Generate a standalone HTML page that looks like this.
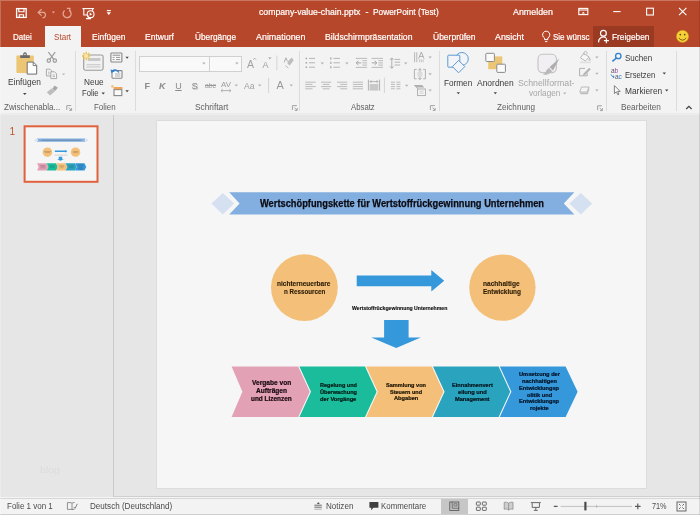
<!DOCTYPE html>
<html lang="de">
<head>
<meta charset="utf-8">
<title>company-value-chain.pptx - PowerPoint (Test)</title>
<style>
html,body{margin:0;padding:0;}
body{width:700px;height:515px;overflow:hidden;position:relative;background:#e6e6e6;font-family:"Liberation Sans",sans-serif;}
.a{position:absolute;}
.t{position:absolute;line-height:1;white-space:nowrap;transform-origin:0 50%;}
#titlebar{left:0;top:0;width:700px;height:47px;background:#b7472a;}
#tabstart{left:45px;top:26px;width:35.5px;height:21px;background:#f3f3f3;}
#share{left:593.3px;top:25.6px;width:61px;height:21.4px;background:#9b3a22;}
#ribbon{left:0;top:47px;width:700px;height:66px;background:#f3f3f3;}
#ribbonline{left:0;top:113px;width:700px;height:1.5px;background:#ececec;}
#work{left:0;top:114.5px;width:700px;height:382.5px;background:#e6e6e6;}
#divider{left:113px;top:114.5px;width:1.4px;height:382.5px;background:#c9c9c9;}
#slide{left:157px;top:121px;width:489.4px;height:366.8px;background:#f6f6f6;box-shadow:0 0 0 0.8px #dadada;}
#status{left:0;top:497px;width:700px;height:18px;background:#f3f3f3;border-top:1px solid #f4f4f4;border-bottom:1px solid #cfcfcf;box-sizing:border-box;}
#statusline{left:0;top:498px;width:700px;height:1px;background:#d6d6d6;}
#workline{left:114.400px;top:496px;width:586px;height:1px;background:#cfcfcf;}
.gs{position:absolute;top:51px;width:1px;height:60px;background:#dcdcdc;}
.combo{position:absolute;background:#f9f9f9;border:1px solid #d0d0d0;box-sizing:border-box;}
#thumb{left:23.600px;top:125.300px;width:74.900px;height:57.500px;box-sizing:border-box;border:1.800px solid #e0623c;background:#f5f5f5;}
#viewsel{left:441px;top:499px;width:27px;height:15px;background:#c6c6c6;}
svg{position:absolute;left:0;top:0;overflow:visible;}
#wb{left:0;top:0;width:700px;height:515px;box-sizing:border-box;border-left:1px solid rgba(255,255,255,0.22);border-top:1px solid rgba(255,255,255,0.25);border-right:1px solid rgba(0,0,0,0.10);pointer-events:none;}
</style>
</head>
<body>
<div class="a" id="titlebar"></div>
<div class="a" id="tabstart"></div>
<div class="a" id="share"></div>
<div class="a" id="ribbon"></div>
<div class="a" id="ribbonline"></div>
<div class="a" id="work"></div>
<div class="a" id="divider"></div>
<div class="a" id="slide"></div>
<div class="a" id="status"></div>
<div class="a" id="statusline"></div>
<div class="a" id="workline"></div>
<div class="a" id="viewsel"></div>
<div class="gs" style="left:74.5px"></div>
<div class="gs" style="left:135.3px"></div>
<div class="gs" style="left:299.3px"></div>
<div class="gs" style="left:439.3px"></div>
<div class="gs" style="left:605.6px"></div>
<div class="gs" style="left:675.5px"></div>
<div class="combo" style="left:138.7px;top:55.5px;width:71px;height:16px"></div>
<div class="combo" style="left:208.9px;top:55.5px;width:33px;height:16px"></div>
<svg width="700" height="515" viewBox="0 0 700 515">
<g id="slideart">
<!-- banner -->
<polygon points="229.2,192.2 574.4,192.2 563.8,203.4 574.4,214.6 229.2,214.6 239.6,203.4" fill="#82afdf"/>
<polygon points="211.4,203.6 222.8,193 234.2,203.6 222.8,214.4" fill="#d5e1f1"/>
<polygon points="569.4,203.6 580.8,193 592.2,203.6 580.8,214.4" fill="#d5e1f1"/>
<!-- circles -->
<circle cx="304.4" cy="287.6" r="33.4" fill="#f4c079"/>
<circle cx="502.4" cy="287.6" r="33.2" fill="#f4c079"/>
<!-- arrows -->
<polygon points="356.7,275.4 431.3,275.4 431.3,270.1 444.2,280.8 431.3,291.5 431.3,286.2 356.7,286.2" fill="#3498db"/>
<polygon points="384.1,320 408.6,320 408.6,337.6 420.8,337.6 396.2,348 371.3,337.6 384.1,337.6" fill="#3498db"/>
<!-- chevrons -->
<polygon points="231.6,366.4 298.2,366.4 309.8,391.7 298.2,417 231.6,417 242.4,391.7" fill="#e3a1b6"/>
<polygon points="299.4,366.4 365.0,366.4 376.6,391.7 365.0,417 299.4,417 311.0,391.7" fill="#1abc9c"/>
<polygon points="366.2,366.4 431.8,366.4 443.4,391.7 431.8,417 366.2,417 377.8,391.7" fill="#f4c079"/>
<polygon points="433.0,366.4 498.6,366.4 510.2,391.7 498.6,417 433.0,417 444.6,391.7" fill="#2aa3bf"/>
<polygon points="499.8,366.4 565.6,366.4 577.6,391.7 565.6,417 499.8,417 511.4,391.7" fill="#3498db"/>
</g>
<rect x="24.600" y="126.300" width="72.900" height="55.500" fill="#f5f5f5" stroke="#e0623c" stroke-width="2"/>
<g id="thumbart" transform="translate(26.5,128.5) scale(0.142) translate(-157,-121)">
<use href="#slideart"/>
<g fill="#333" opacity="0.3">
<rect x="262" y="200" width="280" height="7"/>
<rect x="280" y="281" width="50" height="5"/><rect x="286" y="289" width="38" height="5"/>
<rect x="484" y="281" width="36" height="5"/><rect x="484" y="289" width="36" height="5"/>
<rect x="354" y="306" width="92" height="4"/>
<rect x="253" y="380" width="38" height="5"/><rect x="257" y="388" width="30" height="5"/><rect x="252" y="396" width="40" height="5"/>
<rect x="320" y="382" width="36" height="4"/><rect x="320" y="389" width="36" height="4"/><rect x="320" y="396" width="36" height="4"/>
<rect x="387" y="382" width="36" height="4"/><rect x="389" y="389" width="32" height="4"/><rect x="394" y="396" width="22" height="4"/>
<rect x="452" y="382" width="41" height="4"/><rect x="458" y="389" width="28" height="4"/><rect x="456" y="396" width="33" height="4"/>
<rect x="519" y="372" width="40" height="4"/><rect x="522" y="379" width="35" height="4"/><rect x="519" y="386" width="40" height="4"/><rect x="526" y="393" width="26" height="4"/><rect x="519" y="400" width="40" height="4"/><rect x="529" y="407" width="20" height="4"/>
</g>
</g>
</svg>

<svg width="700" height="515" viewBox="0 0 700 515" fill="none">
<!-- ===== title bar ===== -->
<g stroke="#fff" stroke-width="1.3">
 <rect x="16.6" y="8.6" width="9.6" height="8.8"/>
 <path d="M18.8 8.6v3.2h5.2V8.6" stroke-width="1.1"/>
 <path d="M19.3 17.4v-2.6h4.2v2.6" stroke-width="1.1"/>
</g>
<g stroke="#e0a595" stroke-width="1.3">
 <path d="M41.6 9.2L38.2 12.4L41.6 15.6"/>
 <path d="M38.4 12.4H44a3 3 0 0 1 0 5.2H42.5"/>
 <path d="M69.4 10.4A4 4 0 1 1 64.6 10.6" />
 <path d="M66.8 8.4h3v3.2" />
</g>
<path d="M51.8 11.6h3.2l-1.6 1.9z" fill="#e0a595"/>
<g stroke="#fff" stroke-width="1.1">
 <path d="M82.4 8.6H94"/>
 <path d="M83.8 8.8v6.2h3.4M92.6 8.8v2"/>
 <circle cx="90.6" cy="14.2" r="3.4"/>
 <path d="M88.2 15.4v2.4M86 18.6h5"/>
</g>
<path d="M89.7 12.6l2.5 1.6l-2.5 1.6z" fill="#fff"/>
<path d="M106.800 10.600h4" stroke="#fff" stroke-width="1.100"/>
<path d="M106.600 12.300h4.400l-2.200 2.600z" fill="#fff"/>
<!-- window buttons -->
<g stroke="#fff" stroke-width="1.1">
 <rect x="578.8" y="8.4" width="9" height="6.2"/>
 <path d="M578.8 10h9"/>
 <path d="M613.2 11.6h7.4"/>
 <rect x="646.6" y="8.2" width="6.8" height="6.8"/>
 <path d="M679 7.8l7.4 7.4M686.4 7.8l-7.4 7.4"/>
</g>
<path d="M581.6 13.6l1.7-1.9l1.7 1.9z" fill="#fff"/>
<!-- tell me bulb -->
<g stroke="#fff" stroke-width="1">
 <path d="M544.6 39.6v-1.6a3.6 3.6 0 1 1 3.2 0v1.6z"/>
 <path d="M545 41.6h2.4"/>
</g>
<!-- share person -->
<g stroke="#fff" stroke-width="1.2">
 <circle cx="603.4" cy="33.2" r="2.9"/>
 <path d="M598.6 42.4a4.8 4.8 0 0 1 7.4 -4.6"/>
 <path d="M606.4 38.2v5M603.9 40.7h5"/>
</g>
<!-- smiley -->
<circle cx="682.5" cy="36.4" r="6.1" fill="#f7d038" stroke="#c9961a" stroke-width="0.5"/>
<circle cx="680.3" cy="34.6" r="0.85" fill="#5a4500"/><circle cx="684.7" cy="34.6" r="0.85" fill="#5a4500"/>
<path d="M679 37.8a3.8 3.8 0 0 0 7 0" stroke="#5a4500" stroke-width="0.8"/>

<!-- ===== ribbon: clipboard group ===== -->
<rect x="16.4" y="55.6" width="17.4" height="17.4" rx="0.8" fill="#edc675"/>
<path d="M20.2 57.9v-2.6h3v-1.2a1.8 1.8 0 0 1 3.6 0v1.2h3v2.6z" fill="#6a6a6a"/>
<circle cx="25" cy="54.5" r="0.8" fill="#f3f3f3"/>
<path d="M27.2 62.1h6.2l3.3 3.3v8.7h-9.5z" fill="#fdfdfd" stroke="#6e6e6e" stroke-width="1"/>
<path d="M33.2 62.3v3.3h3.3" stroke="#6e6e6e" stroke-width="0.9"/>
<path d="M23 93h3.6l-1.8 2z" fill="#444"/>
<!-- scissors -->
<g stroke="#9c9c9c" stroke-width="1.2">
 <path d="M48.4 52.2l5.6 7.4M55.2 52.2l-5.6 7.4"/>
 <circle cx="48.8" cy="60.6" r="1.7"/><circle cx="54.8" cy="60.6" r="1.7"/>
</g>
<!-- copy -->
<g stroke="#a2a2a2" stroke-width="0.9" fill="#f3f3f3">
 <path d="M46.4 69.2h3.6l1.6 1.6v5.2h-5.2z"/>
 <path d="M50.8 71.8h3.8l2 2v4.8h-5.8z"/>
 <path d="M48 72.2h1.6M48 73.8h1.6M52.6 75h2.4M52.6 76.6h2.4" stroke-width="0.7"/>
</g>
<path d="M62 73.4h3.2l-1.6 1.9z" fill="#b5b5b5"/>
<!-- format painter -->
<g>
 <path d="M54.6 85.6l3.2 2.2l-2.6 3.2l-3-2z" fill="#a8a8a8"/>
 <path d="M51.6 88.6l3.4 2.6l-5 4.2l-3.2-3.2z" fill="#bdbdbd"/>
</g>
<!-- ===== slides group ===== -->
<rect x="83.7" y="55" width="19.4" height="15.2" rx="1.6" fill="#f1f1f1" stroke="#9b9b9b" stroke-width="1.1"/>
<rect x="87.8" y="58" width="12.6" height="3" fill="#c9c9c9"/>
<rect x="86.6" y="64" width="13.8" height="1.3" fill="#cfcfcf"/>
<rect x="86.6" y="66.3" width="13.8" height="1.3" fill="#cfcfcf"/>
<g stroke="#f0c050" stroke-width="1.3">
 <path d="M86.2 51.800v8.400M82 56h8.400M83.200 53l6 6M89.200 53l-6 6"/>
</g>
<rect x="84.4" y="54.3" width="3.4" height="3.4" fill="#fbe9b3"/>
<path d="M101.5 92.4h3.4l-1.7 2z" fill="#444"/>
<!-- layout -->
<rect x="110.9" y="53" width="11" height="9" rx="0.8" fill="#fafafa" stroke="#868686" stroke-width="1.1"/>
<path d="M112.6 55.2h7.6" stroke="#8a8a8a" stroke-width="1"/>
<path d="M112.6 57.4h2M112.6 59.6h2M116 57.4h4.2M116 59.6h4.2" stroke="#8a8a8a" stroke-width="0.9"/>
<path d="M125.4 56.8h3.4l-1.7 2z" fill="#444"/>
<!-- reset -->
<rect x="112" y="70.6" width="10" height="7.6" rx="0.6" fill="#fafafa" stroke="#868686" stroke-width="1.1"/>
<path d="M115 74h5.4M115 76h5.4" stroke="#9a9a9a" stroke-width="0.8"/>
<path d="M118.8 72.6a4 4 0 0 0 -6.4 -1.6" stroke="#2f7fcf" stroke-width="1.3"/>
<path d="M110.6 69.2l0.6 3.8l3.4-1.4z" fill="#2f7fcf"/>
<!-- section -->
<rect x="114" y="89.6" width="7.8" height="6" fill="#fafafa" stroke="#868686" stroke-width="1.1"/>
<rect x="113.6" y="87" width="8.8" height="2.2" fill="#f0a35a"/>
<circle cx="112.4" cy="86.4" r="1.3" fill="#f3c27a"/>
<path d="M125.4 90.2h3.4l-1.7 2z" fill="#444"/>

<!-- ===== font group ===== -->
<path d="M202.2 62.4h3.4l-1.70 2z" fill="#b0b0b0"/><path d="M235.2 62.4h3.4l-1.70 2z" fill="#b0b0b0"/><path d="M253.4 59.6l1.3-1.4l1.3 1.4" stroke="#a0a0a0" stroke-width="0.9"/><path d="M268.2 57.4h3.4l-1.7 1.9z" fill="#a0a0a0"/><path d="M276.9 55.6v14.8" stroke="#d4d4d4" stroke-width="1"/><path d="M288.6 60.4l3.2-2.8l1.9 2.6l-4 5.2l-2.4-1.8z" fill="#bdbdbd"/><path d="M284.2 62.4l1.7-4.6l1.6 3.6" stroke="#a6a6a6" stroke-width="0.9"/><path d="M285.4 65.6l3 2.4" stroke="#b5b5b5" stroke-width="0.9"/><path d="M221 90.6h10M222.6 89.2l-1.6 1.4l1.6 1.4M229.4 89.2l1.6 1.4l-1.6 1.4" stroke="#a2a2a2" stroke-width="0.8"/><path d="M234.6 84.6h3.4l-1.70 2z" fill="#b2b2b2"/><path d="M258.0 84.6h3.4l-1.70 2z" fill="#b2b2b2"/><path d="M289.6 84.6h3.4l-1.70 2z" fill="#b2b2b2"/><path d="M268.6 77.8v15.2" stroke="#d4d4d4" stroke-width="1"/><path d="M292.4 110.0v-4.4h4.4" stroke="#9a9a9a" stroke-width="0.9"/><path d="M294.4 107.6l2.6 2.6M297.2 108.0v2.4h-2.4" stroke="#9a9a9a" stroke-width="0.9"/><path d="M66.8 110.0v-4.4h4.4" stroke="#9a9a9a" stroke-width="0.9"/><path d="M68.8 107.6l2.6 2.6M71.6 108.0v2.4h-2.4" stroke="#9a9a9a" stroke-width="0.9"/>
<!-- ===== paragraph group ===== -->
<rect x="305.6" y="57.7" width="1.5" height="1.5" fill="#a6a6a6"/><path d="M309 58.4h6" stroke="#b4b4b4" stroke-width="1"/><rect x="305.6" y="62.1" width="1.5" height="1.5" fill="#a6a6a6"/><path d="M309 62.8h6" stroke="#b4b4b4" stroke-width="1"/><rect x="305.6" y="66.5" width="1.5" height="1.5" fill="#a6a6a6"/><path d="M309 67.2h6" stroke="#b4b4b4" stroke-width="1"/><path d="M320.6 62.4h3.4l-1.70 2z" fill="#b2b2b2"/><rect x="330.3" y="57.3" width="1.1" height="2.3" fill="#a0a0a0"/><path d="M333.4 58.4h6.5" stroke="#b4b4b4" stroke-width="1"/><rect x="330.3" y="61.7" width="1.1" height="2.3" fill="#a0a0a0"/><path d="M333.4 62.8h6.5" stroke="#b4b4b4" stroke-width="1"/><rect x="330.3" y="66.1" width="1.1" height="2.3" fill="#a0a0a0"/><path d="M333.4 67.2h6.5" stroke="#b4b4b4" stroke-width="1"/><path d="M345.2 62.4h3.4l-1.70 2z" fill="#b2b2b2"/><path d="M355.8 58.4h11.3M355.8 67.4h11.3M362.4 60.7h4.7M362.4 62.9h4.7M362.4 65.1h4.7" stroke="#b4b4b4" stroke-width="0.9"/><path d="M356.2 62.9h5M358.4 60.8l-2.2 2.1l2.2 2.1" stroke="#a4a4a4" stroke-width="1"/><path d="M371.6 58.4h11.4M371.6 67.4h11.4M378.4 60.7h4.6M378.4 62.9h4.6M378.4 65.1h4.6" stroke="#b4b4b4" stroke-width="0.9"/><path d="M371.8 62.9h5M374.6 60.8l2.2 2.1l-2.2 2.1" stroke="#a4a4a4" stroke-width="1"/><path d="M391.8 58v10.2M390 59.8l1.8-1.9l1.8 1.9M390 66.4l1.8 1.9l1.8-1.9" stroke="#a6a6a6" stroke-width="0.9"/><path d="M394.6 59.4h5.6M394.6 62.2h5.6M394.6 65h5.6" stroke="#b4b4b4" stroke-width="1"/><path d="M404.0 62.6h3.4l-1.70 2z" fill="#b2b2b2"/><path d="M414.6 52.2v10M416.8 52.2v10" stroke="#b0b0b0" stroke-width="0.9"/><path d="M418.6 58.6l2.7-6.6l2.7 6.6M419.6 56.4h3.4" stroke="#a6a6a6" stroke-width="0.9"/><path d="M419.6 59.4v2.8M421.4 59.4v2.8M423.2 59.4v2.8" stroke="#b8b8b8" stroke-width="0.8"/><path d="M428.4 56.4h3.4l-1.70 2z" fill="#b2b2b2"/><path d="M416.6 69.4h-2.2v9.4h2.2M423.2 69.4h2.2v9.4h-2.2" stroke="#a8a8a8" stroke-width="0.9"/><path d="M419.9 68.6v11M418.2 70.4l1.7-1.8l1.7 1.8M418.2 77.8l1.7 1.8l1.7-1.8" stroke="#aaaaaa" stroke-width="0.9"/><rect x="417.4" y="72" width="5" height="4.4" fill="#dcdcdc"/><path d="M428.4 73.2h3.4l-1.70 2z" fill="#b2b2b2"/><path d="M414 85h8l2.4 2.6h-8z" fill="#b0b0b0"/><path d="M414.4 85.2l3.2 3.4v2.6" stroke="#b0b0b0" stroke-width="0.9"/><rect x="417.6" y="89" width="7.8" height="6.6" fill="#f6f6f6" stroke="#a8a8a8" stroke-width="0.9"/><path d="M419.4 91.2h4.2M419.4 93.2h4.2" stroke="#c4c4c4" stroke-width="0.8"/><path d="M428.4 89.4h3.4l-1.70 2z" fill="#b2b2b2"/><path d="M305.3 82.2h10.4M305.3 84.4h7.2M305.3 86.6h10.4M305.3 88.8h7.2" stroke="#b4b4b4" stroke-width="0.9"/><path d="M321.0 82.2h10.2M322.7 84.4h6.8M321.0 86.6h10.2M322.7 88.8h6.8" stroke="#b4b4b4" stroke-width="0.9"/><path d="M337.0 82.2h10.2M340.2 84.4h7M337.0 86.6h10.2M340.2 88.8h7" stroke="#b4b4b4" stroke-width="0.9"/><path d="M352.8 82.2h10.2M352.8 84.4h10.2M352.8 86.6h10.2M352.8 88.8h10.2" stroke="#b4b4b4" stroke-width="0.9"/><path d="M368.4 79.6v11M379.6 79.6v11" stroke="#a8a8a8" stroke-width="0.9"/><path d="M370 81.6h8M371.4 80.2l-1.4 1.4l1.4 1.4M376.6 80.2l1.4 1.4l-1.4 1.4" stroke="#a4a4a4" stroke-width="0.8"/><rect x="369.6" y="84" width="8.8" height="6.6" fill="#c9c9c9"/><path d="M384.4 77.6v15.4" stroke="#d4d4d4" stroke-width="1"/><path d="M390.9 82.2h4M396.4 82.2h4M390.9 84.4h4M396.4 84.4h4M390.9 86.6h4M396.4 86.6h4M390.9 88.8h4M396.4 88.8h4" stroke="#b4b4b4" stroke-width="0.9"/><path d="M405.0 84.8h3.4l-1.70 2z" fill="#b2b2b2"/><path d="M430.4 110.0v-4.4h4.4" stroke="#9a9a9a" stroke-width="0.9"/><path d="M432.4 107.6l2.6 2.6M435.2 108.0v2.4h-2.4" stroke="#9a9a9a" stroke-width="0.9"/>

<!-- ===== drawing group ===== -->
<circle cx="461.9" cy="58.9" r="6.4" fill="#f2f4f7" stroke="#5b9bd5" stroke-width="1"/><rect x="447.8" y="55.2" width="12" height="12" rx="0.8" fill="#f2f4f7" stroke="#5b9bd5" stroke-width="1"/><path d="M458.6 60.4l6.2 6.2l-6.2 6.2l-6.2-6.2z" fill="#f2f4f7" stroke="#5b9bd5" stroke-width="1"/><path d="M456.6 92.2h3.4l-1.70 2z" fill="#444"/><rect x="488.2" y="56.4" width="14.1" height="12.8" fill="#edc675"/><rect x="485.8" y="53.3" width="8.6" height="8.2" rx="0.8" fill="#fafafa" stroke="#8a8a8a" stroke-width="1"/><rect x="496.8" y="64.2" width="8.6" height="8.2" rx="0.8" fill="#fafafa" stroke="#8a8a8a" stroke-width="1"/><path d="M493.6 92.2h3.4l-1.70 2z" fill="#444"/><rect x="538" y="54.2" width="18.4" height="18.4" rx="4.6" fill="#f1eff4" stroke="#c2c2c2" stroke-width="1.1"/><path d="M559.4 58.6l-9.800 8.400l3.400 3.600z" fill="#adadad"/><path d="M549 67.800l3.200 3.400l-2.800 2.300c-2.200 1.600-4.800 1.300-6.600 1c2-1 3-2.400 3.600-4.200z" fill="#b9b9b9"/><path d="M563.0 92.4h3.4l-1.70 2z" fill="#b4b4b4"/><path d="M583.6 53.4l5.6 3.6l-3.8 4l-5-3.2z" fill="#f6f6f6" stroke="#b0b0b0" stroke-width="0.9"/><path d="M584 55v-2.2a1.5 1.5 0 0 1 3 0v1.6" stroke="#b0b0b0" stroke-width="0.8"/><path d="M589.6 57.2c0.8 1.2 1.2 2 1.2 2.6a1.1 1.1 0 0 1 -2.2 0c0-0.6 0.4-1.4 1-2.6z" fill="#c4c4c4"/><rect x="580" y="61.6" width="10.6" height="1.6" fill="#dedede"/><path d="M595.2 56.4h3.4l-1.70 2z" fill="#b2b2b2"/><path d="M585 68.4h-5.4v7.4h7.6v-3" stroke="#a8a8a8" stroke-width="0.9"/><path d="M589.2 67.8l1.6 1.4l-6 6l-2.2 0.8l0.8-2.2z" fill="#b4b4b4"/><path d="M595.2 72.8h3.4l-1.70 2z" fill="#b2b2b2"/><path d="M581.6 87h7.4l-2 5h-7.4z" fill="#f4f4f4" stroke="#b4b4b4" stroke-width="0.9"/><path d="M579.6 92.4l1.2 1.8h7l1.6-5l-0.4-2.2l-2 5.4z" fill="#bdbdbd"/><path d="M595.2 89.4h3.4l-1.70 2z" fill="#b2b2b2"/><path d="M597.6 110.2v-4.4h4.4" stroke="#9a9a9a" stroke-width="0.9"/><path d="M599.6 107.8l2.6 2.6M602.4 108.2v2.4h-2.4" stroke="#9a9a9a" stroke-width="0.9"/>
<!-- ===== editing group ===== -->
<circle cx="618.3" cy="56" r="2.7" stroke="#2f7fcf" stroke-width="1.3"/><path d="M616.4 58l-4 3.4" stroke="#2f7fcf" stroke-width="1.5"/><path d="M662.6 72.6h3.4l-1.70 2z" fill="#444"/><path d="M665.0 89.4h3.4l-1.70 2z" fill="#444"/><path d="M614.4 85.6v8l2-1.8l1.4 3l1.2-0.6l-1.4-2.8h2.6z" fill="#fafafa" stroke="#666" stroke-width="0.8"/><path d="M611 74.4c0.4 1.6 1.6 2.4 3 2.4M612.8 75.6l1.4 1.2l-1.2 1.4" stroke="#2f7fcf" stroke-width="0.9"/><path d="M686.2 109l2.7-2.6l2.7 2.6" stroke="#444" stroke-width="1.3"/>

<!-- ===== status bar ===== -->
<path d="M67.4 502.6h3.6l1 0.8v6h-4.6zM72 503.4l1-0.8h1.6" stroke="#777" stroke-width="0.8"/><path d="M72 509.4h2.4M73.8 507l1.2 1.4l2.4-4.6" stroke="#777" stroke-width="0.9"/><path d="M316.8 504h3l-1.5-2z" fill="#5a5a5a"/><path d="M314.4 505.2h7.4M314.4 507.2h7.4" stroke="#5a5a5a" stroke-width="0.9"/><path d="M314.4 509.2h7.4" stroke="#a8a8a8" stroke-width="0.9"/><path d="M369.4 502h9v5.8h-5l-2.2 2.4v-2.4h-1.8z" fill="#3f3f3f"/><rect x="449.8" y="502" width="9" height="8.4" fill="none" stroke="#5a5a5a" stroke-width="0.9"/><path d="M452.2 502v6.2h6.6" stroke="#5a5a5a" stroke-width="0.8"/><rect x="454" y="503.8" width="3" height="2.2" stroke="#5a5a5a" stroke-width="0.7"/><rect x="476.4" y="502" width="3.9" height="3.2" rx="0.5" stroke="#5a5a5a" stroke-width="0.9"/><rect x="482.4" y="502" width="3.9" height="3.2" rx="0.5" stroke="#5a5a5a" stroke-width="0.9"/><rect x="476.4" y="507.2" width="3.9" height="3.2" rx="0.5" stroke="#5a5a5a" stroke-width="0.9"/><rect x="482.4" y="507.2" width="3.9" height="3.2" rx="0.5" stroke="#5a5a5a" stroke-width="0.9"/><path d="M508.6 503.2v7M504.2 502.4c1.6-0.4 3-0.2 4.4 0.8c1.4-1 2.8-1.200 4.400-0.800v6.800c-1.600-0.400-3-0.200-4.400 0.800c-1.400-1-2.800-1.200-4.400-0.800z" stroke="#8a8a8a" stroke-width="0.8" fill="#cfcfcf"/><path d="M530.8 502.600h10M532.200 503v4.400h7.200v-4.400M535.800 507.400v2.600M533.800 510.400h4" stroke="#5a5a5a" stroke-width="0.9"/><path d="M553.800 506.400h3.800M635 506.400h5.600M637.800 503.600v5.600" stroke="#5a5a5a" stroke-width="1.200"/><path d="M560.600 506.400h71.400" stroke="#b4b4b4" stroke-width="0.800"/><path d="M596.600 504.800v3.200" stroke="#b4b4b4" stroke-width="0.800"/><rect x="584.300" y="501.800" width="2.200" height="8.600" fill="#4a4a4a"/><rect x="677" y="502" width="9" height="9" stroke="#5a5a5a" stroke-width="0.900"/><path d="M679 504l1.600 1.600M684 504l-1.600 1.600M679 509l1.600-1.600M684 509l-1.600-1.600" stroke="#5a5a5a" stroke-width="0.900"/>
</svg>

<div id="txt" style="position:absolute;left:0;top:0;width:700px;height:515px;will-change:transform">
<span class="t" style="left:258.60px;top:8.20px;font-size:9px;color:#ffffff;transform:scaleX(0.9651);-webkit-text-stroke:0.2px #fff;">company-value-chain.pptx</span>
<span class="t" style="left:365.60px;top:8.20px;font-size:9px;color:#ffffff;-webkit-text-stroke:0.2px #fff;">-</span>
<span class="t" style="left:373.40px;top:8.20px;font-size:9px;color:#ffffff;transform:scaleX(0.9249);-webkit-text-stroke:0.2px #fff;">PowerPoint (Test)</span>
<span class="t" style="left:513.00px;top:8.20px;font-size:9px;color:#ffffff;transform:scaleX(0.9869);-webkit-text-stroke:0.2px #fff;">Anmelden</span>
<span class="t" style="left:12.90px;top:32.80px;font-size:9px;color:#ffffff;transform:scaleX(0.8946);-webkit-text-stroke:0.2px #fff;">Datei</span>
<span class="t" style="left:54.00px;top:32.80px;font-size:9px;color:#B7472A;transform:scaleX(0.8993);">Start</span>
<span class="t" style="left:91.50px;top:32.80px;font-size:9px;color:#ffffff;transform:scaleX(0.9428);-webkit-text-stroke:0.2px #fff;">Einfügen</span>
<span class="t" style="left:145.00px;top:32.80px;font-size:9px;color:#ffffff;transform:scaleX(0.9503);-webkit-text-stroke:0.2px #fff;">Entwurf</span>
<span class="t" style="left:195.00px;top:32.80px;font-size:9px;color:#ffffff;transform:scaleX(0.9204);-webkit-text-stroke:0.2px #fff;">Übergänge</span>
<span class="t" style="left:256.00px;top:32.80px;font-size:9px;color:#ffffff;transform:scaleX(0.9891);-webkit-text-stroke:0.2px #fff;">Animationen</span>
<span class="t" style="left:325.00px;top:32.80px;font-size:9px;color:#ffffff;transform:scaleX(0.9610);-webkit-text-stroke:0.2px #fff;">Bildschirmpräsentation</span>
<span class="t" style="left:432.50px;top:32.80px;font-size:9px;color:#ffffff;transform:scaleX(0.9438);-webkit-text-stroke:0.2px #fff;">Überprüfen</span>
<span class="t" style="left:494.50px;top:32.80px;font-size:9px;color:#ffffff;transform:scaleX(0.9825);-webkit-text-stroke:0.2px #fff;">Ansicht</span>
<span class="t" style="left:552.50px;top:32.80px;font-size:9px;color:#ffffff;transform:scaleX(0.8896);-webkit-text-stroke:0.2px #fff;">Sie wünsc</span>
<span class="t" style="left:611.50px;top:32.80px;font-size:9px;color:#ffffff;transform:scaleX(0.9252);-webkit-text-stroke:0.2px #fff;">Freigeben</span>
<span class="t" style="left:8.20px;top:78.30px;font-size:9px;color:#3b3b3b;transform:scaleX(0.9259);">Einfügen</span>
<span class="t" style="left:83.70px;top:78.30px;font-size:9px;color:#3b3b3b;transform:scaleX(0.9156);">Neue</span>
<span class="t" style="left:82.00px;top:89.40px;font-size:9px;color:#3b3b3b;transform:scaleX(0.8506);">Folie</span>
<span class="t" style="left:443.75px;top:78.75px;font-size:9px;color:#3b3b3b;transform:scaleX(0.9108);">Formen</span>
<span class="t" style="left:477.00px;top:78.75px;font-size:9px;color:#3b3b3b;transform:scaleX(0.9412);">Anordnen</span>
<span class="t" style="left:518.00px;top:78.75px;font-size:9px;color:#a6a6a6;transform:scaleX(0.9736);">Schnellformat-</span>
<span class="t" style="left:528.75px;top:89.25px;font-size:9px;color:#a6a6a6;transform:scaleX(0.9050);">vorlagen</span>
<span class="t" style="left:624.80px;top:54.00px;font-size:9px;color:#3b3b3b;transform:scaleX(0.8909);">Suchen</span>
<span class="t" style="left:624.80px;top:70.60px;font-size:9px;color:#3b3b3b;transform:scaleX(0.8500);">Ersetzen</span>
<span class="t" style="left:624.80px;top:86.90px;font-size:9px;color:#3b3b3b;transform:scaleX(0.9296);">Markieren</span>
<span class="t" style="left:3.80px;top:103.40px;font-size:8.6px;color:#5e5e5e;transform:scaleX(0.9411);">Zwischenabla...</span>
<span class="t" style="left:94.00px;top:103.40px;font-size:8.6px;color:#5e5e5e;transform:scaleX(0.9271);">Folien</span>
<span class="t" style="left:195.00px;top:103.40px;font-size:8.6px;color:#5e5e5e;transform:scaleX(0.9668);">Schriftart</span>
<span class="t" style="left:351.25px;top:103.40px;font-size:8.6px;color:#5e5e5e;transform:scaleX(0.9037);">Absatz</span>
<span class="t" style="left:497.00px;top:103.40px;font-size:8.6px;color:#5e5e5e;transform:scaleX(0.9467);">Zeichnung</span>
<span class="t" style="left:621.00px;top:103.40px;font-size:8.6px;color:#5e5e5e;transform:scaleX(0.9596);">Bearbeiten</span>
<span class="t" style="left:144.50px;top:81.80px;font-size:9px;color:#8a8a8a;font-weight:bold;">F</span>
<span class="t" style="left:159.00px;top:81.80px;font-size:9px;color:#8a8a8a;font-weight:bold;font-style:italic;">K</span>
<span class="t" style="left:175.20px;top:81.50px;font-size:9px;color:#8a8a8a;text-decoration:underline;">U</span>
<span class="t" style="left:191.50px;top:80.80px;font-size:9.5px;color:#8a8a8a;text-shadow:0.7px 0.7px 0 #c4c4c4;">S</span>
<span class="t" style="left:204.50px;top:82.30px;font-size:7.5px;color:#9a9a9a;transform:scaleX(0.9096);text-decoration:line-through;">abc</span>
<span class="t" style="left:221.00px;top:80.50px;font-size:7.5px;color:#9a9a9a;transform:scaleX(1.0579);">AV</span>
<span class="t" style="left:243.75px;top:80.80px;font-size:9.5px;color:#a0a0a0;transform:scaleX(0.9032);">Aa</span>
<span class="t" style="left:276.50px;top:80.00px;font-size:11px;color:#9a9a9a;">A</span>
<span class="t" style="left:247.00px;top:58.50px;font-size:10.5px;color:#a0a0a0;">A</span>
<span class="t" style="left:262.50px;top:60.50px;font-size:9px;color:#a0a0a0;">A</span>
<span class="t" style="left:9.60px;top:126.70px;font-size:10px;color:#C4532F;">1</span>
<span class="t" style="left:39.80px;top:464.60px;font-size:9.5px;color:#dcdcdc;transform:scaleX(1.1075);">blog</span>
<span class="t" style="left:7.10px;top:501.60px;font-size:8.3px;color:#4a4a4a;transform:scaleX(0.9639);">Folie 1 von 1</span>
<span class="t" style="left:90.00px;top:501.60px;font-size:8.3px;color:#4a4a4a;transform:scaleX(0.9750);">Deutsch (Deutschland)</span>
<span class="t" style="left:326.30px;top:501.60px;font-size:8.3px;color:#4a4a4a;transform:scaleX(0.9737);">Notizen</span>
<span class="t" style="left:381.40px;top:501.60px;font-size:8.3px;color:#4a4a4a;transform:scaleX(0.9516);">Kommentare</span>
<span class="t" style="left:652.00px;top:501.60px;font-size:8.3px;color:#4a4a4a;transform:scaleX(0.8790);">71%</span>
<span class="t" style="left:260.00px;top:199.20px;font-size:10px;color:#0b0b14;font-weight:bold;transform:scaleX(0.9288);-webkit-text-stroke:0.25px #0b0b14;">Wertschöpfungskette für Wertstoffrückgewinnung Unternehmen</span>
<span class="t" style="left:277.20px;top:280.80px;font-size:6.7px;color:#2a1a05;font-weight:bold;transform:scaleX(0.9755);-webkit-text-stroke:0.12px #2a1a05;">nichterneuerbare</span>
<span class="t" style="left:283.50px;top:288.80px;font-size:6.7px;color:#2a1a05;font-weight:bold;transform:scaleX(0.9337);-webkit-text-stroke:0.12px #2a1a05;">n Ressourcen</span>
<span class="t" style="left:483.40px;top:280.90px;font-size:6.7px;color:#2a1a05;font-weight:bold;transform:scaleX(0.9846);-webkit-text-stroke:0.12px #2a1a05;">nachhaltige</span>
<span class="t" style="left:482.70px;top:288.80px;font-size:6.7px;color:#2a1a05;font-weight:bold;transform:scaleX(0.9647);-webkit-text-stroke:0.12px #2a1a05;">Entwicklung</span>
<span class="t" style="left:352.10px;top:306.40px;font-size:5.4px;color:#111;font-weight:bold;transform:scaleX(0.9574);-webkit-text-stroke:0.15px #111;">Wertstoffrückgewinnung Unternehmen</span>
<span class="t" style="left:251.90px;top:380.30px;font-size:6.4px;color:#1a0a12;font-weight:bold;transform:scaleX(1.0312);-webkit-text-stroke:0.22px #1a0a12;">Vergabe von</span>
<span class="t" style="left:256.00px;top:388.30px;font-size:6.4px;color:#1a0a12;font-weight:bold;transform:scaleX(1.0269);-webkit-text-stroke:0.22px #1a0a12;">Aufträgen</span>
<span class="t" style="left:251.15px;top:395.60px;font-size:6.4px;color:#1a0a12;font-weight:bold;transform:scaleX(1.0053);-webkit-text-stroke:0.22px #1a0a12;">und Lizenzen</span>
<span class="t" style="left:320.00px;top:382.80px;font-size:5.7px;color:#021c14;font-weight:bold;transform:scaleX(0.9757);-webkit-text-stroke:0.22px #021c14;">Regelung und</span>
<span class="t" style="left:320.00px;top:389.60px;font-size:5.7px;color:#021c14;font-weight:bold;transform:scaleX(0.9838);-webkit-text-stroke:0.22px #021c14;">Überwachung</span>
<span class="t" style="left:320.35px;top:396.50px;font-size:5.7px;color:#021c14;font-weight:bold;transform:scaleX(1.0014);-webkit-text-stroke:0.22px #021c14;">der Vorgänge</span>
<span class="t" style="left:386.00px;top:383.00px;font-size:5.7px;color:#1f1404;font-weight:bold;transform:scaleX(0.9812);-webkit-text-stroke:0.22px #1f1404;">Sammlung von</span>
<span class="t" style="left:390.00px;top:389.60px;font-size:5.7px;color:#1f1404;font-weight:bold;transform:scaleX(0.9642);-webkit-text-stroke:0.22px #1f1404;">Steuern und</span>
<span class="t" style="left:393.85px;top:396.30px;font-size:5.7px;color:#1f1404;font-weight:bold;transform:scaleX(0.9982);-webkit-text-stroke:0.22px #1f1404;">Abgaben</span>
<span class="t" style="left:452.10px;top:383.00px;font-size:5.7px;color:#03161c;font-weight:bold;transform:scaleX(0.9929);-webkit-text-stroke:0.22px #03161c;">Einnahmenvert</span>
<span class="t" style="left:458.10px;top:389.60px;font-size:5.7px;color:#03161c;font-weight:bold;transform:scaleX(1.0017);-webkit-text-stroke:0.22px #03161c;">eilung und</span>
<span class="t" style="left:455.25px;top:396.50px;font-size:5.7px;color:#03161c;font-weight:bold;transform:scaleX(0.9924);-webkit-text-stroke:0.22px #03161c;">Management</span>
<span class="t" style="left:518.90px;top:372.40px;font-size:5.7px;color:#041326;font-weight:bold;transform:scaleX(0.9977);-webkit-text-stroke:0.22px #041326;">Umsetzung der</span>
<span class="t" style="left:521.95px;top:379.10px;font-size:5.7px;color:#041326;font-weight:bold;transform:scaleX(0.9949);-webkit-text-stroke:0.22px #041326;">nachhaltigen</span>
<span class="t" style="left:519.35px;top:385.80px;font-size:5.7px;color:#041326;font-weight:bold;transform:scaleX(0.9990);-webkit-text-stroke:0.22px #041326;">Entwicklungsp</span>
<span class="t" style="left:526.85px;top:392.50px;font-size:5.7px;color:#041326;font-weight:bold;transform:scaleX(0.9928);-webkit-text-stroke:0.22px #041326;">olitik und</span>
<span class="t" style="left:519.35px;top:399.30px;font-size:5.7px;color:#041326;font-weight:bold;transform:scaleX(0.9990);-webkit-text-stroke:0.22px #041326;">Entwicklungsp</span>
<span class="t" style="left:530.05px;top:405.90px;font-size:5.7px;color:#041326;font-weight:bold;transform:scaleX(1.0023);-webkit-text-stroke:0.22px #041326;">rojekte</span>
<span class="t" style="left:611.00px;top:68.20px;font-size:6.5px;color:#555;">a</span>
<span class="t" style="left:614.40px;top:68.20px;font-size:6.5px;color:#8e44ad;">b</span>
<span class="t" style="left:615.00px;top:73.90px;font-size:6.5px;color:#555;">a</span>
<span class="t" style="left:618.40px;top:73.90px;font-size:6.5px;color:#2f7fcf;">c</span>
</div>
<div class="a" id="wb"></div>
</body>
</html>
